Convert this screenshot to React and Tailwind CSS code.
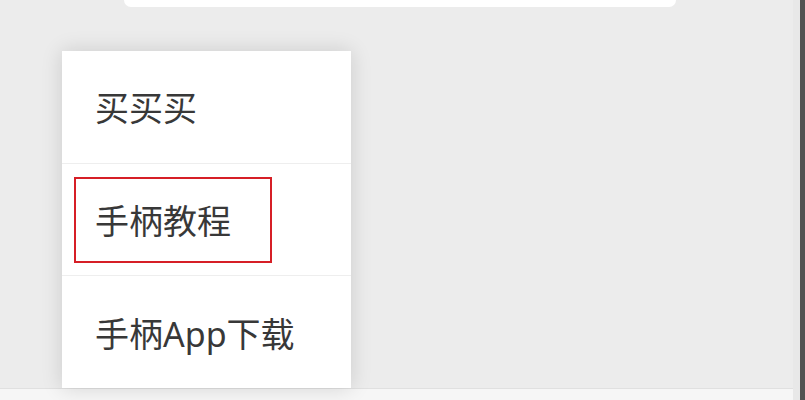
import React from "react";

const items = [
  { label: "买买买" },
  { label: "手柄教程", marked: true },
  { label: "手柄App下载" },
];

export default function App() {
  return (
    <div
      className="flex h-[400px] w-[805px] overflow-hidden bg-[#ececec]"
      style={{ fontFamily: '"Noto Sans", "Noto Sans CJK SC", sans-serif' }}
    >
      {/* main column */}
      <div className="flex flex-1 flex-col">
        {/* top search box edge */}
        <div className="ml-[124px] h-[7px] w-[552px] rounded-b-[7px] bg-white" />

        {/* popup menu */}
        <div className="relative z-10 ml-[62px] mt-[44px] flex h-[337px] w-[289px] flex-col bg-white shadow-[0_0_20px_rgba(0,0,0,0.14)]">
          {items.map((item, i) => (
            <div
              key={i}
              className={`flex flex-1 items-center ${i > 0 ? "border-t border-[#eeeeee]" : ""}`}
            >
              {item.marked ? (
                <div className="ml-3 flex h-[86px] w-[198px] items-center border-2 border-[#d61f26] pl-[19px]">
                  <span className="mt-[2px] text-[34px] leading-none text-[#383838]">{item.label}</span>
                </div>
              ) : (
                <span className="mt-[3px] pl-[33px] text-[34px] leading-none text-[#383838]">
                  {item.label}
                </span>
              )}
            </div>
          ))}
        </div>

        {/* bottom bar */}
        <div className="flex-1 border-t border-[#e0e0e0] bg-[#f6f6f6]" />
      </div>

      {/* right scroll edge */}
      <div className="w-[7px] bg-[#e8e8e8]" />
      <div className="w-[5px] bg-[#525252]" />
    </div>
  );
}
